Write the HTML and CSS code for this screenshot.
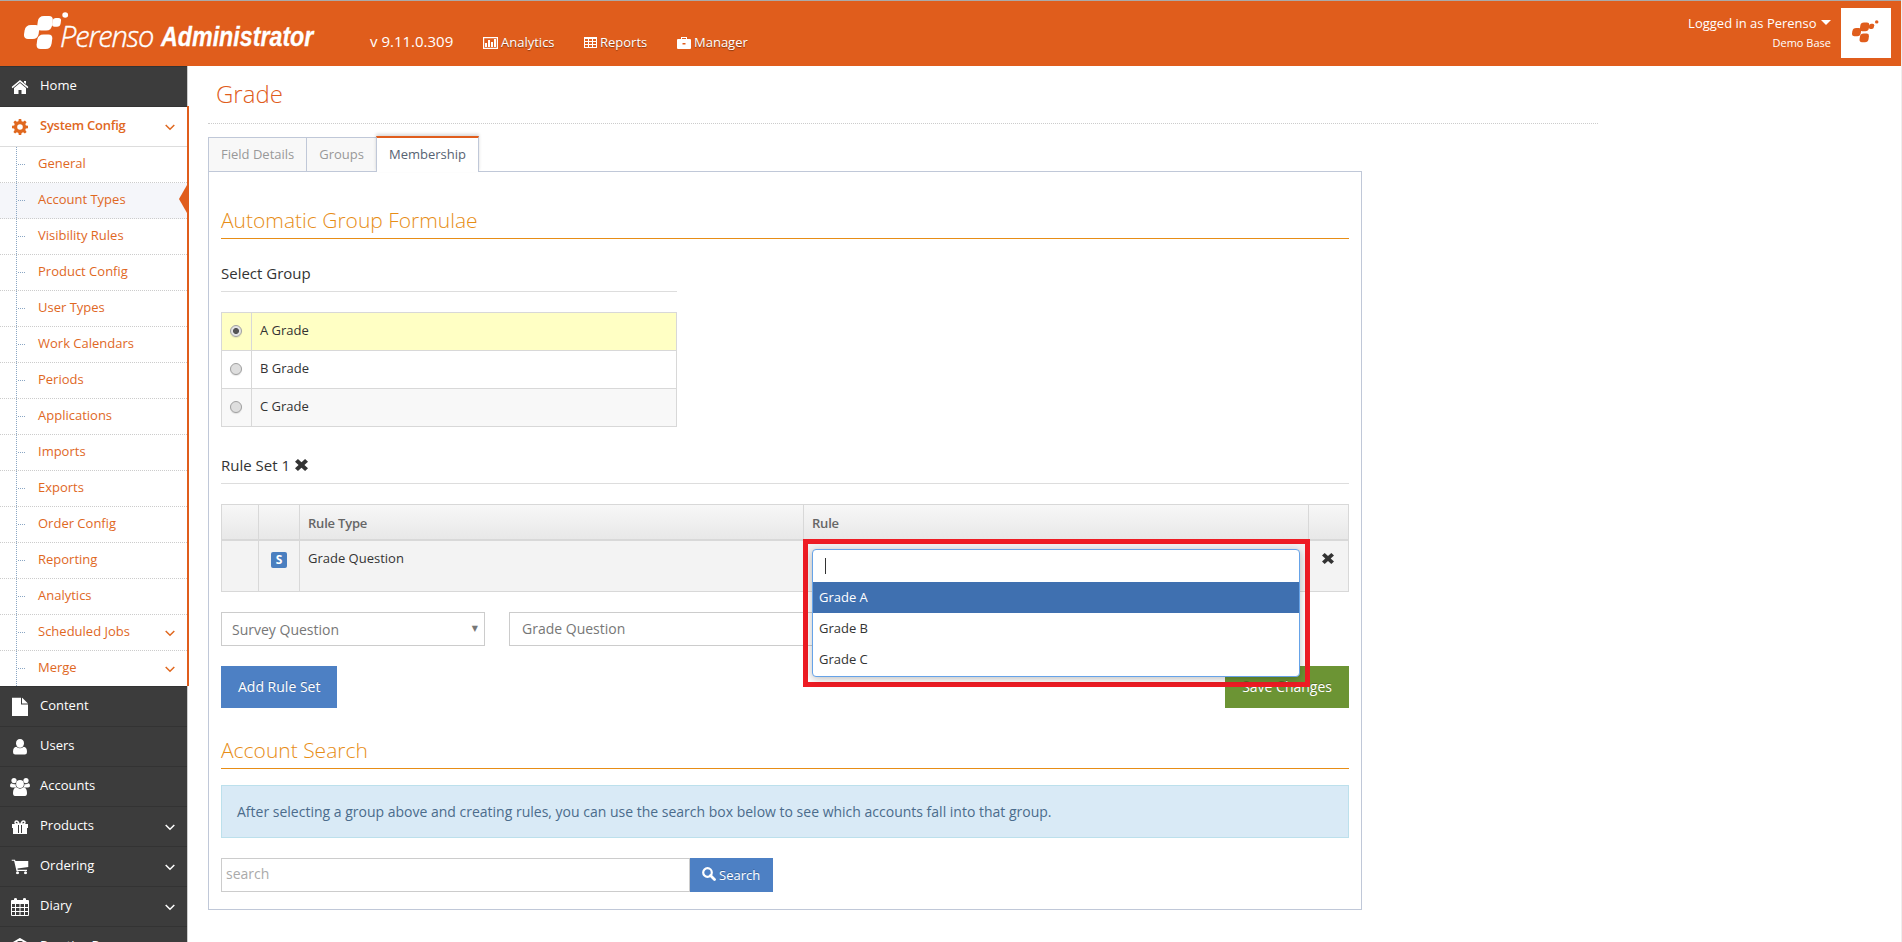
FILE: index.html
```html
<!DOCTYPE html>
<html lang="en">
<head>
  <meta charset="UTF-8">
  <meta name="viewport" content="width=device-width, initial-scale=1.0">
  <title>Perenso Administrator</title>
  <link rel="stylesheet" href="styles.css">
</head>
<body>
  <!-- shared icons -->
  <svg class="sprite" width="0" height="0">
    <symbol id="i-mark" viewBox="0 0 45 38">
      <path d="M20 4h5q4 0 3.800 4l-.6 5q-.8 5.500-6 5.500h-5q-4.500 0-4-4.500l.6-4.500Q14.500 4 20 4z"/>
      <path d="M7 13h4.500q4 0 3.800 4l-.7 5q-.8 5-6 5H4Q-.3 27 0 22.500l.6-4Q1.500 13 7 13z"/>
      <path d="M19.500 22.500h5q4 0 3.800 4l-.7 5q-.8 5.500-6 5.500h-5q-4.300 0-4-4.500l.6-4.500q.8-5.500 6.300-5.500z"/>
      <path d="M32 6h2.500q2.800 0 2.500 2.500l-.4 3q-.5 3.200-3.600 3.200h-2.500q-2.700 0-2.400-2.700l.4-2.800Q29 6 32 6z"/>
      <ellipse cx="41.200" cy="3" rx="2.900" ry="2.700"/>
    </symbol>
    <symbol id="i-times" viewBox="0 0 12 12"><path d="M2.700 0 6 3.300 9.300 0 12 2.700 8.700 6 12 9.300 9.300 12 6 8.700 2.700 12 0 9.300 3.300 6 0 2.700z"/></symbol>
    <symbol id="i-down" viewBox="0 0 10 7"><path d="M.7 1 5 5.300 9.300 1" fill="none" stroke="currentColor" stroke-width="1.500"/></symbol>
  </svg>

  <header class="navbar">
    <div class="brand">
      <svg class="brand-mark"><use href="#i-mark"/></svg>
      <span class="brand-name">Perenso</span>
      <span class="brand-product">Administrator</span>
    </div>
    <span class="version">v 9.11.0.309</span>
    <nav class="top-links">
      <a class="link-analytics">
        <svg width="15" height="12" viewBox="0 0 15 12"><path d="M.6.600h13.800v10.800H.6z" fill="none" stroke="currentColor" stroke-width="1.200"/><path d="M2 6h2v4H2zM5 3h2v7H5zM8 5h2v5H8zM11 2h2v8h-2z"/></svg>
        Analytics
      </a>
      <a class="link-reports">
        <svg width="13" height="11" viewBox="0 0 13 11"><path fill-rule="evenodd" d="M0 0h13v11H0zM1 2v2h3V2zM5 2v2h3V2zM9 2v2h3V2zM1 5v2h3V5zM5 5v2h3V5zM9 5v2h3V5zM1 8v2h3V8zM5 8v2h3V8zM9 8v2h3V8z"/></svg>
        Reports
      </a>
      <a class="link-manager">
        <svg width="14" height="12" viewBox="0 0 14 12"><path fill-rule="evenodd" d="M4 2V0h6v2h3q1 0 1 1v8q0 1-1 1H1q-1 0-1-1V3q0-1 1-1zM5 1v1h4V1zM5.500 6v1.500h3V6z"/></svg>
        Manager
      </a>
    </nav>
    <div class="user">
      <div class="user-info">
        <div class="user-name">Logged in as Perenso <i class="caret"></i></div>
        <div class="user-base">Demo Base</div>
      </div>
      <div class="user-photo"><svg width="27" height="23"><use href="#i-mark"/></svg></div>
    </div>
  </header>

  <div class="page">
    <aside class="sidebar">
      <a class="nav-item nav-home">
        <svg width="17" height="14" viewBox="0 0 17 14"><path d="M8.500 0 17 7l-1 1.200L8.500 2 1 8.200 0 7zM12.500 1h2v3l-2-1.600z"/><path d="M8.500 3 14.500 8v6H10v-4H7v4H2.500V8z"/></svg>
        Home
      </a>
      <div class="nav-open">
        <a class="nav-item nav-config">
          <svg width="16" height="16" viewBox="0 0 16 16"><path fill-rule="evenodd" d="M6.800 0h2.400l.4 2.200 1.500.6L12.900 1.500l1.700 1.700-1.300 1.800.6 1.500 2.100.3v2.400l-2.200.4-.5 1.500 1.300 1.800-1.700 1.700-1.800-1.300-1.500.6-.4 2.100H6.800l-.4-2.100-1.500-.6-1.800 1.300-1.700-1.700 1.300-1.800-.6-1.500L0 9.200V6.800l2.200-.3L2.700 5 1.400 3.200l1.700-1.700 1.800 1.300 1.500-.6zM8 5.200a2.800 2.800 0 1 0 0 5.600 2.800 2.800 0 0 0 0-5.600z"/></svg>
          System Config
          <svg class="arrow"><use href="#i-down"/></svg>
        </a>
        <ul class="submenu">
          <li>General</li>
          <li class="active">Account Types</li>
          <li>Visibility Rules</li>
          <li>Product Config</li>
          <li>User Types</li>
          <li>Work Calendars</li>
          <li>Periods</li>
          <li>Applications</li>
          <li>Imports</li>
          <li>Exports</li>
          <li>Order Config</li>
          <li>Reporting</li>
          <li>Analytics</li>
          <li>Scheduled Jobs <svg class="arrow"><use href="#i-down"/></svg></li>
          <li>Merge <svg class="arrow"><use href="#i-down"/></svg></li>
        </ul>
      </div>
      <a class="nav-item">
        <svg width="16" height="19" viewBox="0 0 16 19"><path d="M0 0h9v7h7v11.500H0zM10 0l6 6h-6z"/></svg>
        Content
      </a>
      <a class="nav-item">
        <svg width="14" height="16" viewBox="0 0 14 16"><path d="M7 0c2.500 0 4 1.800 4 4.200S9.300 8.700 7 8.700 3 6.600 3 4.200 4.500 0 7 0z"/><path d="M3.300 7.700Q7 11 10.700 7.700 14 8 14 13q0 2.500-2.200 2.500H2.200Q0 15.500 0 13q0-5 3.300-5.300z"/></svg>
        Users
      </a>
      <a class="nav-item">
        <svg width="20" height="18" viewBox="0 0 20 18"><circle cx="4" cy="2.600" r="2.600"/><circle cx="16" cy="2.600" r="2.600"/><circle cx="10" cy="6" r="3.900"/><path d="M1.500 5.200Q4 7 5.500 6q0 2 1 3.400H2Q0 9.400 0 8q0-2.700 1.500-2.800zM18.500 5.200Q16 7 14.500 6q0 2-1 3.400H18q2 0 2-1.400 0-2.700-1.500-2.800z"/><path d="M6.500 9.300q3.500 2.700 7 0Q17 9.800 17 15q0 3-2 3H5q-2 0-2-3 0-5.200 3.500-5.700z"/></svg>
        Accounts
      </a>
      <a class="nav-item">
        <svg width="16" height="14" viewBox="0 0 16 14"><path fill-rule="evenodd" d="M0 4h16v4h-1v6H1V8H0zM6 5v8h1V5zM9 5v8h1V5z"/><path d="M7.200 4Q6 1 4.500 1T3 2.500 4.500 4zM8.800 4q1.200-3 2.700-3T13 2.500 11.500 4z" fill="none" stroke="currentColor" stroke-width="1.500"/></svg>
        Products
        <svg class="arrow"><use href="#i-down"/></svg>
      </a>
      <a class="nav-item">
        <svg width="17" height="15" viewBox="0 0 17 15"><path d="M0 0h3.500l.4 1.500H17v6L6 9l.2 1.200H15.500v1.300H5L2.600 1.300H0z"/><circle cx="6" cy="13.300" r="1.500"/><circle cx="14" cy="13.300" r="1.500"/></svg>
        Ordering
        <svg class="arrow"><use href="#i-down"/></svg>
      </a>
      <a class="nav-item">
        <svg width="18" height="18" viewBox="0 0 18 18"><path fill-rule="evenodd" d="M1 2h2V1q0-1 1.500-1T6 1v1h6V1q0-1 1.500-1T15 1v1h2q1 0 1 1v14q0 1-1 1H1q-1 0-1-1V3q0-1 1-1zM1 6v3h3V6zM5 6v3h3.500V6zM9.500 6v3H13V6zM14 6v3h3V6zM1 10v3h3v-3zM5 10v3h3.500v-3zM9.500 10v3H13v-3zM14 10v3h3v-3zM1 14v3h3v-3zM5 14v3h3.500v-3zM9.500 14v3H13v-3zM14 14v3h3v-3z"/></svg>
        Diary
        <svg class="arrow"><use href="#i-down"/></svg>
      </a>
      <a class="nav-item">
        <svg width="14" height="18" viewBox="0 0 14 18"><path d="M7 1 13 4.500v9L7 17l-6-3.500v-9z" fill="none" stroke="currentColor" stroke-width="2"/><circle cx="7" cy="7" r="2.500"/></svg>
        Practice Page
      </a>
    </aside>

    <main class="content">
      <h1>Grade</h1>
      <div class="tabs">
        <a class="tab">Field Details</a>
        <a class="tab">Groups</a>
        <a class="tab active">Membership</a>
      </div>
      <div class="panel">
        <h2>Automatic Group Formulae</h2>
        <h4 class="select-title">Select Group</h4>
        <table class="groups">
          <tr class="selected"><td class="pick"><i class="radio checked"></i></td><td>A Grade</td></tr>
          <tr><td class="pick"><i class="radio"></i></td><td>B Grade</td></tr>
          <tr class="odd"><td class="pick"><i class="radio"></i></td><td>C Grade</td></tr>
        </table>

        <h4 class="rule-title">Rule Set 1 <svg width="13" height="12" viewBox="0 0 12 12" preserveAspectRatio="none"><use href="#i-times"/></svg></h4>
        <div class="rule-area">
          <div class="rules">
            <div class="rules-row rules-head">
              <div></div><div></div><div>Rule Type</div><div>Rule</div><div></div>
            </div>
            <div class="rules-row rules-body">
              <div></div>
              <div><span class="badge">S</span></div>
              <div>Grade Question</div>
              <div></div>
              <div><svg width="12" height="11" viewBox="0 0 12 12" preserveAspectRatio="none"><use href="#i-times"/></svg></div>
            </div>
          </div>
          <div class="rule-inputs">
            <div class="select">Survey Question <span class="select-arrow">▼</span></div>
            <div class="input">Grade Question</div>
          </div>
          <div class="buttons">
            <a class="btn btn-blue">Add Rule Set</a>
            <a class="btn btn-green">Save Changes</a>
          </div>
          <!-- open dropdown lies over the table and the buttons -->
          <div class="highlight">
            <div class="dropdown">
              <div class="dropdown-input"><i class="cursor"></i></div>
              <div class="option current">Grade A</div>
              <div class="option">Grade B</div>
              <div class="option">Grade C</div>
            </div>
          </div>
        </div>

        <h2 class="search-title">Account Search</h2>
        <div class="alert">After selecting a group above and creating rules, you can use the search box below to see which accounts fall into that group.</div>
        <div class="search">
          <div class="search-input">search</div>
          <a class="search-btn">
            <svg width="14" height="14" viewBox="0 0 14 14"><circle cx="5.500" cy="5.500" r="4.300" fill="none" stroke="currentColor" stroke-width="2.200"/><path d="m8.500 8.500 4 4" stroke="currentColor" stroke-width="2.800" stroke-linecap="round"/></svg>
            Search
          </a>
        </div>
      </div>
    </main>
  </div>
</body>
</html>
```
FILE: styles.css
```css
* {
  box-sizing: border-box;
}
body {
  margin: 0;
  height: 942px;
  overflow: hidden;
  background: #fff;
  border-right: 1px solid #eee;
  color: #333;
  font: 13px/20px "Open Sans", sans-serif;
}
svg {
  fill: currentColor;
}
.sprite {
  position: absolute;
}

/* header */
.navbar {
  display: flex;
  height: 66px;
  background: #e05d1c;
  border-top: 1px solid #aaa;
  color: #fff;
}
.brand {
  display: flex;
  width: 370px;
  padding: 11px 0 0 24px;
  white-space: nowrap;
}
.brand-mark {
  width: 45px;
  height: 38px;
}
.brand-name {
  margin: 9px 0 0 -9px;
  width: 101px;
  font-size: 29px;
  line-height: 30px;
  font-style: italic;
  font-weight: 300;
  letter-spacing: -1.1px;
  -webkit-text-stroke: 0.4px #fff;
}
.brand-product {
  font: italic bold 28px/30px "Liberation Sans", sans-serif;
  margin-top: 10px;
  transform: scaleX(0.83);
  transform-origin: left;
  -webkit-text-stroke: 0.3px #fff;
}
.version {
  width: 113px;
  padding-top: 30px;
  font-size: 15px;
}
.top-links {
  display: flex;
  padding-top: 31px;
  text-shadow: 0 1px 1px rgba(0, 0, 0, 0.4);
}
.top-links a {
  display: flex;
  gap: 3px;
}
.top-links svg {
  margin-top: 5px;
}
.link-analytics {
  width: 101px;
}
.link-reports {
  width: 93px;
}
.user {
  display: flex;
  gap: 10px;
  margin-left: auto;
  padding: 7px 10px 0 0;
}
.user-info {
  padding-top: 5px;
  text-align: right;
}
.caret {
  display: inline-block;
  margin: 0 0 3px 1px;
  border: 5px solid transparent;
  border-top-color: #fff;
  border-bottom: 0;
}
.user-base {
  font-size: 11px;
}
.user-photo {
  width: 50px;
  height: 50px;
  padding: 12px 0 0 11px;
  background: #fff;
  color: #e05d1c;
}

/* sidebar */
.page {
  display: flex;
}
.sidebar {
  width: 188px;
  height: 876px;
  flex: none;
  border-right: 1px solid #ccc;
}
.nav-item {
  display: flex;
  align-items: center;
  position: relative;
  height: 40px;
  padding: 0 0 3px 40px;
  background: #3c3c3c;
  border-top: 1px solid #333;
  color: #fff;
}
.nav-item > svg:first-child {
  position: absolute;
  left: 20px;
  top: 20px;
  transform: translate(-50%, -50%);
}
.sidebar .arrow {
  position: absolute;
  right: 12px;
  top: 50%;
  width: 10px;
  height: 7px;
  margin-top: -3px;
}
.nav-home {
  height: 41px;
  border-bottom: 1px solid #333;
}
.nav-open {
  width: 189px;
  margin-top: -1px;
  position: relative;
  border-right: 2px solid #e05d1c;
  padding-top: 1px;
}
.nav-config {
  background: #fff;
  border-top: 0;
  border-bottom: 1px solid #ddd;
  color: #e0681f;
  font-weight: 600;
  letter-spacing: -0.25px;
}
.submenu {
  margin: 0;
  padding: 0;
  list-style: none;
  position: relative;
}
.submenu::before {
  content: "";
  position: absolute;
  left: 16px;
  top: 0;
  bottom: 0;
  z-index: 1;
  border-left: 1px dotted #8aa6c4;
}
.submenu li {
  position: relative;
  height: 36px;
  padding: 6px 0 0 38px;
  border-bottom: 1px dotted #ccc;
  color: #e0681f;
}
.submenu li:last-child {
  height: 35px;
  border-bottom: 0;
}
.submenu li::before {
  content: "";
  position: absolute;
  left: 18px;
  top: 17px;
  width: 7px;
  border-top: 1px dotted #8aa6c4;
}
.submenu .active {
  background: #f5f6fa;
}
.submenu .active::after {
  content: "";
  position: absolute;
  right: 0;
  top: 2px;
  border: 14px solid transparent;
  border-right: 8px solid #e05d1c;
  border-left: 0;
}

/* content */
.content {
  padding-left: 20px;
}
h1 {
  width: 1390px;
  height: 58px;
  margin: 0 0 12px;
  padding: 11px 0 0 8px;
  border-bottom: 1px dotted #ccc;
  color: #e05d1c;
  font-size: 24px;
  line-height: 34px;
  font-weight: 300;
}
.tabs {
  display: flex;
  position: relative;
  align-items: flex-end;
  height: 36px;
  margin-bottom: -1px;
}
.tab {
  height: 35px;
  padding: 6px 12px 0;
  margin-right: -1px;
  border: 1px solid #c0c8d8;
  background: #f8f8f8;
  color: #999;
}
.tab.active {
  height: 36px;
  border-top: 2px solid #e05d1c;
  border-bottom: 0;
  background: #fff;
  color: #576373;
  box-shadow: 0 -2px 3px rgba(0, 0, 0, 0.15);
}
.panel {
  width: 1154px;
  height: 739px;
  border: 1px solid #c0c8d8;
  padding: 30px 12px 0;
}
h2 {
  height: 37px;
  margin: 0;
  border-bottom: 1px solid #e78d16;
  color: #e78d16;
  font-size: 21px;
  line-height: 36px;
  font-weight: 300;
}
h4 {
  margin: 0;
  border-bottom: 1px solid #ddd;
  font-size: 15px;
  line-height: 20px;
  font-weight: 400;
}
.select-title {
  width: 456px;
  height: 29px;
  margin: 24px 0 20px;
}
.groups {
  width: 456px;
  border-collapse: collapse;
}
.groups td {
  height: 38px;
  padding: 0 8px 3px;
  border: 1px solid #d8d8d8;
}
.groups .pick {
  width: 30px;
  padding: 0 0 1px 8px;
}
.groups .selected {
  background: #ffffc4;
}
.groups .odd {
  background: #f8f8f8;
}
.radio {
  display: block;
  width: 12px;
  height: 12px;
  border: 1px solid #a0a0a0;
  border-radius: 50%;
  background: #dedede;
  box-shadow: 0 1px 1px rgba(0, 0, 0, 0.1);
}
.radio.checked {
  background: radial-gradient(circle, #555 2.6px, #e4e4e4 3.4px);
}
.rule-title {
  height: 29px;
  margin: 28px 0 20px;
}
.rule-title svg {
  margin-left: 1px;
}
.rule-area {
  position: relative;
}
.rules {
  border: 1px solid #d8d8d8;
}
.rules-row {
  display: grid;
  grid-template-columns: 37px 41px 504px 505px 1fr;
}
.rules-row div {
  padding: 8px 0 0 8px;
  border-right: 1px solid #d8d8d8;
}
.rules-row div:last-child {
  border-right: 0;
  padding: 8px 0 0 13px;
}
.rules-head {
  height: 36px;
  background: linear-gradient(#f7f7f7, #e8e8e8);
  border-bottom: 2px solid #d8d8d8;
  color: #666;
  font-weight: 600;
  letter-spacing: -0.2px;
}
.rules-body {
  height: 50px;
  background: #f3f3f3;
}
.rules-body div {
  padding-top: 7px;
}
.rules-body .badge {
  display: block;
  width: 16px;
  height: 16px;
  margin: 4px 0 0 4px;
  border-radius: 2px;
  background: #4a7fc0;
  color: #fff;
  font-size: 12px;
  line-height: 16px;
  font-weight: 700;
  text-align: center;
}
.rule-inputs {
  display: flex;
  gap: 24px;
  margin: 20px 0;
  color: #777;
  font-size: 14px;
}
.select,
.input {
  height: 34px;
  border: 1px solid #ccc;
}
.select {
  display: flex;
  justify-content: space-between;
  width: 264px;
  padding: 7px 6px 0 10px;
}
.select-arrow {
  font: 8px/17px "DejaVu Sans", sans-serif;
}
.input {
  width: 570px;
  padding: 6px 12px;
}
.buttons {
  display: flex;
  justify-content: space-between;
}
.btn {
  height: 42px;
  padding: 0 17px;
  color: #fff;
  font-size: 14px;
  line-height: 42px;
  text-shadow: 0 -1px 0 rgba(0, 0, 0, 0.25);
}
.btn-blue {
  background: #4d80c4;
}
.btn-green {
  background: #6c9434;
}
.highlight {
  position: absolute;
  left: 582px;
  top: 35px;
  width: 507px;
  height: 148px;
  padding: 5px 4px;
  border: 5px solid #ee1c24;
}
.dropdown {
  width: 488px;
  height: 128px;
  border: 1px solid #66a3e8;
  border-radius: 4px;
  background: #fff;
  box-shadow: 0 2px 8px rgba(0, 0, 0, 0.25);
}
.dropdown-input {
  height: 32px;
  padding: 8px 12px;
}
.cursor {
  display: block;
  width: 1px;
  height: 16px;
  background: #333;
}
.option {
  height: 31px;
  padding-left: 6px;
  line-height: 31px;
}
.option.current {
  background: #3f70b0;
  color: #fff;
}
.search-title {
  margin: 24px 0 16px;
}
.alert {
  height: 53px;
  padding: 16px 15px;
  border: 1px solid #bce0ec;
  background: #d9eaf6;
  color: #4b6c8c;
  font-size: 14px;
}
.search {
  display: flex;
  margin-top: 20px;
}
.search-input {
  width: 469px;
  height: 34px;
  padding: 5px 4px;
  border: 1px solid #ccc;
  color: #aaa;
  font-size: 14px;
}
.search-btn {
  display: flex;
  gap: 3px;
  width: 83px;
  height: 34px;
  padding: 7px 12px;
  background: #4d80c4;
  color: #fff;
  text-shadow: 0 -1px 0 rgba(0, 0, 0, 0.25);
}
.search-btn svg {
  margin-top: 2px;
}
```
